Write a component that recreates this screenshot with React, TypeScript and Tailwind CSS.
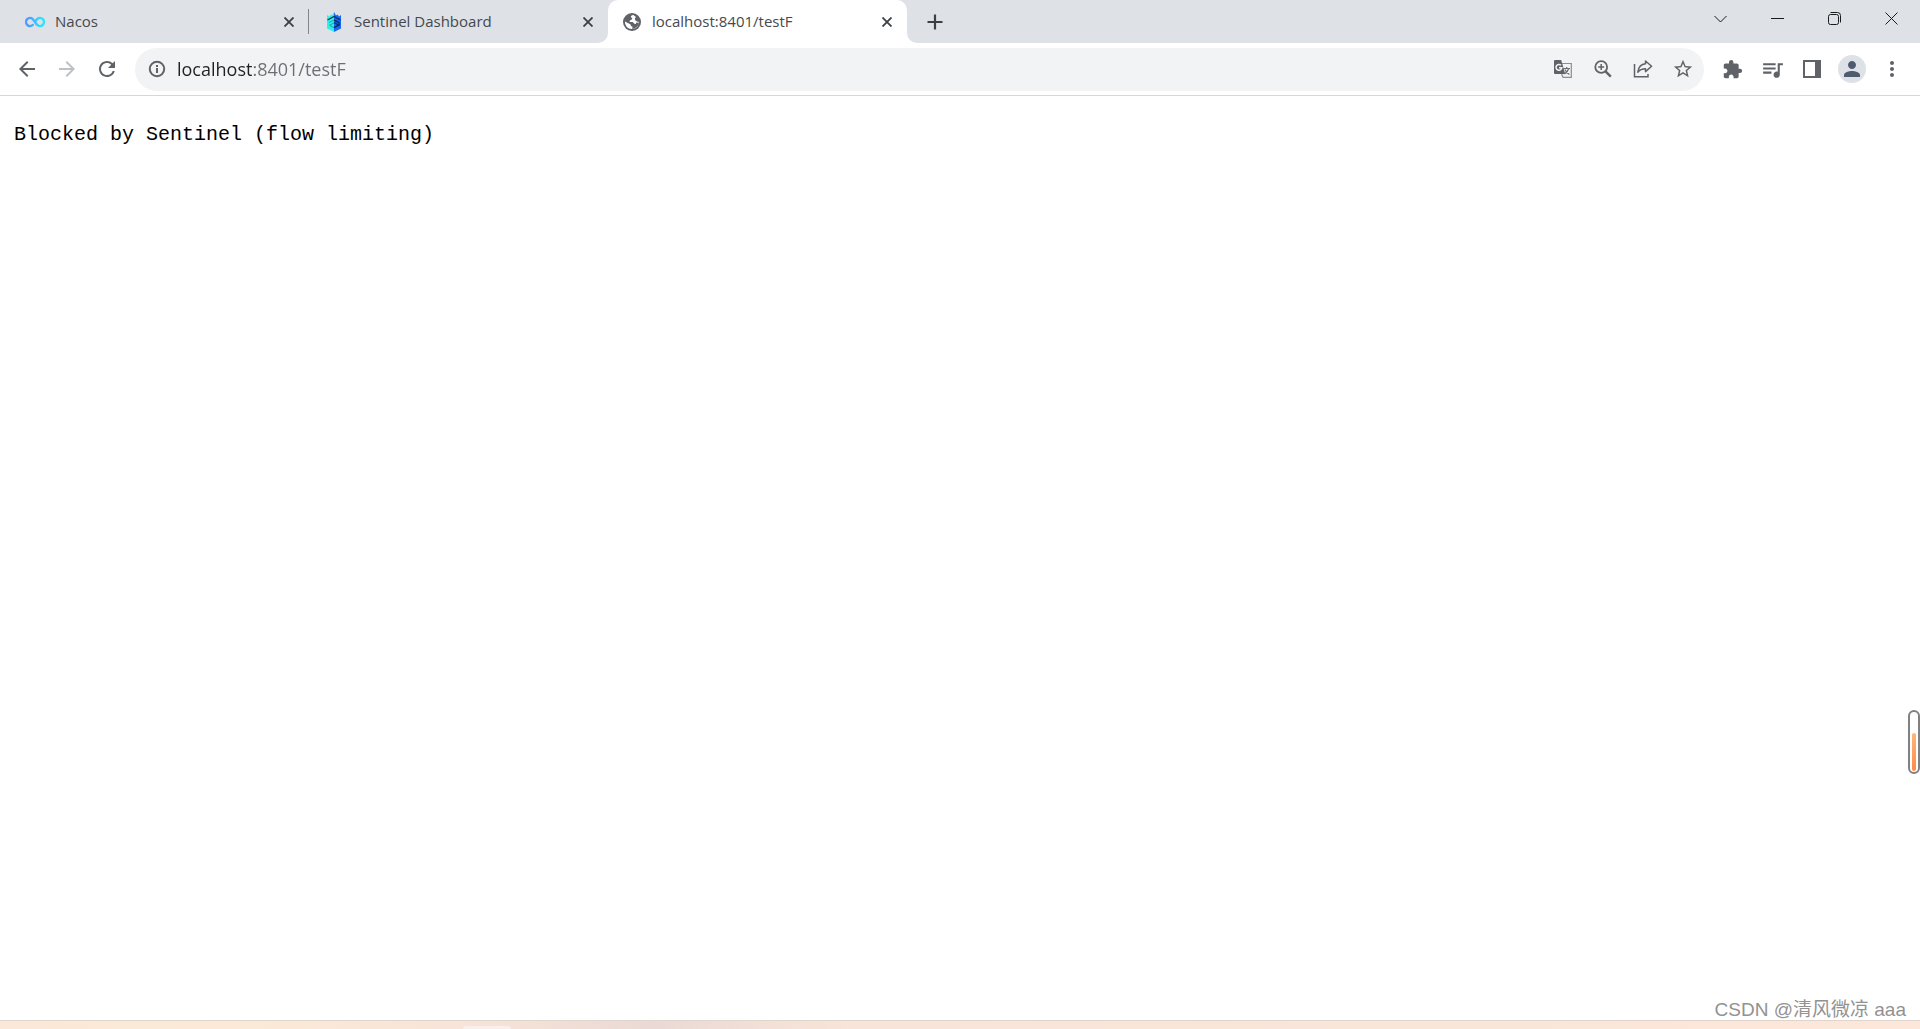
import React, { useState } from 'react';
import {
    MdArrowBack,
    MdArrowForward,
    MdExtension,
    MdMoreVert,
    MdPerson,
    MdQueueMusic,
    MdRefresh,
    MdStarBorder,
} from 'react-icons/md';

interface TabItem {
    id: string;
    title: string;
    icon: React.ReactNode;
}

const NacosIcon = () => (
    <svg viewBox="0 0 20 20" className="size-5" fill="none" strokeWidth="2.4" strokeLinecap="round">
        <defs>
            <linearGradient id="nacos" gradientUnits="userSpaceOnUse" x1="0" y1="0" x2="20" y2="0">
                <stop offset="0.2" stopColor="#4f9bff" />
                <stop offset="0.8" stopColor="#2ce3ff" />
            </linearGradient>
        </defs>
        <path
            stroke="url(#nacos)"
            d="M7.8 12.9A4 4 0 1 1 7.8 7.1C9.2 8.4 10.8 11.6 12.2 12.9A4 4 0 1 0 12.2 7.1C11.3 7.9 10.8 8.6 10.4 9.2"
        />
    </svg>
);

const SentinelIcon = () => (
    <svg viewBox="0 0 20 20" className="size-5">
        <path fill="#2ff0e4" d="M3 3 5 4.5 7 2.5 8 3.5 10 0V20L3 16.5Z" />
        <path fill="#1769f5" d="M10 0 12 3.5 13.5 2.5 15 4.5 17 3V16.5L10 20Z" />
        <path fill="none" stroke="#06335f" strokeWidth="1.4" d="M3.5 8 10 4.5 16.5 8M10 8 15 10.5V13L10 15.5" />
        <path fill="none" stroke="#0c8fae" strokeWidth="0.8" d="M10 8 5 10.5M10 11 5.5 13.2M5.5 13.2 10 15.8" />
        <path fill="none" stroke="#062a78" strokeWidth="1.2" d="M10 10.5 15.5 13.5" />
    </svg>
);

const GlobeIcon = () => (
    <svg viewBox="0 0 18 18" className="mr-px size-[18px]">
        <circle cx="9" cy="9" r="9" fill="#5f6368" />
        <path fill="#fff" d="M10.3 2.1C8.6 2.4 7.7 3.1 7.9 4.2L9.3 5 8.8 6.6 6.9 7.4 6.6 8.9 9.6 9.1 11.4 10.8 12.9 10.9 13.3 9.4 15.8 9.8A7 7 0 0 1 9.2 16L9.5 13.8 8 12.9 7.4 11.2 4.7 9.9 2 8.4A7 7 0 0 0 2.2 10.8 7 7 0 0 0 8.4 16L10 16A7 7 0 0 0 16 9L14 8.6 12.2 7.2 11.9 5.2 13 4.1Z" />
    </svg>
);

const InfoIcon = () => (
    <svg viewBox="0 0 20 20" className="size-5" fill="none" stroke="#5f6368" strokeWidth="2">
        <circle cx="10" cy="10" r="7.2" />
        <path d="M10 9V14M10 6V8" />
    </svg>
);

const TranslateIcon = () => (
    <svg viewBox="0 0 20 20" className="size-5" fill="none">
        <path stroke="#8b8e92" strokeWidth="1.2" d="M9 4.5H18.3V18.3H10L8.6 15" />
        <path stroke="#6b6f74" strokeWidth="1.2" d="M10.5 9.5H17M13.7 8V9.5M15.7 9.5C15 12 13.4 13.6 11.4 15M12 10.5C13 13 14.6 14.4 16.4 15.6" />
        <path fill="#5f6368" d="M2 1H8.2L12.2 15H2A1 1 0 0 1 1 14V2A1 1 0 0 1 2 1Z" />
        <path stroke="#f1f3f4" strokeWidth="1.5" d="M8 6.3A2.9 2.9 0 1 0 8.8 8.7H6" />
    </svg>
);

const ZoomIcon = () => (
    <svg viewBox="0 0 20 20" className="size-5" fill="none" stroke="#5f6368" strokeWidth="1.8">
        <circle cx="8.2" cy="8" r="5.9" />
        <path strokeWidth="1.5" d="M8.2 5V11M5.2 8H11.2" />
        <path strokeWidth="2.4" d="M12.3 12.1 17.8 17.6" />
    </svg>
);

const ShareIcon = () => (
    <svg viewBox="0 0 20 20" className="size-5" fill="none" stroke="#5f6368" strokeWidth="1.5">
        <path d="M1.5 5V17.8H15V15" />
        <path strokeLinejoin="round" d="M12.5 2 18.6 7.2 12.5 12.6V9.8C9.2 9.8 6.8 10.8 4.8 13.2 5.4 8.6 8.2 5.2 12.5 4.8Z" />
    </svg>
);

const CloseIcon = () => (
    <svg viewBox="0 0 10 10" className="size-[10px]" stroke="#3c4043" strokeWidth="1.8">
        <path d="M0.5 0.5 9.5 9.5M9.5 0.5 0.5 9.5" />
    </svg>
);

const PanelIcon = () => (
    <svg viewBox="0 0 18 18" className="size-[18px]" fill="#5f6368">
        <path fillRule="evenodd" d="M0 0H18V18H0ZM2 2V16H12V2Z" />
    </svg>
);

const tabs: TabItem[] = [
    { id: 'nacos', title: 'Nacos', icon: <NacosIcon /> },
    { id: 'sentinel', title: 'Sentinel Dashboard', icon: <SentinelIcon /> },
    { id: 'testf', title: 'localhost:8401/testF', icon: <GlobeIcon /> },
];

const windowButtons = [
    { label: 'Search tabs', path: 'M0.5 4 6.5 10 12.5 4' },
    { label: 'Minimize', path: 'M0 6.5H13' },
    { label: 'Restore', path: 'M2.5 2.5H8.5Q10.5 2.5 10.5 4.5V10.5Q10.5 12.5 8.5 12.5H2.5Q0.5 12.5 0.5 10.5V4.5Q0.5 2.5 2.5 2.5ZM2.5 0.5H9.5Q12.5 0.5 12.5 3.5V10.5' },
    { label: 'Close', path: 'M0.5 0.5 12.5 12.5M12.5 0.5 0.5 12.5' },
];

const IconButton: React.FC<{ label: string; children: React.ReactNode }> = ({ label, children }) => (
    <button type="button" aria-label={label} className="flex h-10 w-10 shrink-0 items-center justify-center text-[#5f6368]">
        {children}
    </button>
);

// Outward curve at the foot of the selected tab
const Flare: React.FC<{ className: string }> = ({ className }) => (
    <svg viewBox="0 0 10 10" className={`absolute bottom-0 size-[10px] ${className}`}>
        <path fill="#fff" d="M10 0V10H0A10 10 0 0 0 10 0Z" />
    </svg>
);

const App: React.FC = () => {
    const [active, setActive] = useState('testf');
    const [url, setUrl] = useState('localhost:8401/testF');

    return (
        <div className="relative flex min-h-screen flex-col bg-white font-['Open_Sans','Noto_Sans_CJK_SC',sans-serif]">
            <header className="border-b border-[#d5d7da]">
                <div className="flex h-[43px] bg-[#dee1e6] pl-[10px]">
                    {tabs.map((tab) => {
                        const selected = tab.id === active;
                        return (
                            <div
                                key={tab.id}
                                className={`relative flex w-[299px] items-center pr-3 pl-[15px] ${selected ? 'rounded-t-[10px] bg-white' : ''}`}
                            >
                                {selected && <Flare className="-left-[10px]" />}
                                {selected && <Flare className="-right-[10px] -scale-x-100" />}
                                <button
                                    type="button"
                                    onClick={() => setActive(tab.id)}
                                    className="flex min-w-0 flex-1 items-center gap-[10px] text-left text-[15px] text-[#45494d]"
                                >
                                    {tab.icon}
                                    <span className="truncate">{tab.title}</span>
                                </button>
                                <button type="button" aria-label={`Close ${tab.title}`} className="flex size-4 items-center justify-center">
                                    <CloseIcon />
                                </button>
                                {tab.id === 'nacos' && <span className="absolute right-0 h-[25px] w-px bg-[#80868b]" />}
                            </div>
                        );
                    })}
                    <button type="button" aria-label="New tab" className="ml-2 flex w-10 items-center justify-center">
                        <svg viewBox="0 0 16 16" className="size-4" stroke="#3c4043" strokeWidth="2.2">
                            <path d="M8 0.5V15.5M0.5 8H15.5" />
                        </svg>
                    </button>
                    <div className="ml-auto flex h-9">
                        {windowButtons.map((button) => (
                            <button
                                key={button.label}
                                type="button"
                                aria-label={button.label}
                                className="flex w-[57px] items-center justify-center"
                            >
                                <svg viewBox="0 0 13 13" className="size-[13px]" fill="none" stroke="#1b1b1b">
                                    <path d={button.path} />
                                </svg>
                            </button>
                        ))}
                    </div>
                </div>

                <div className="flex h-[52px] items-center pr-2 pl-[7px]">
                    <IconButton label="Back"><MdArrowBack size={24} /></IconButton>
                    <button type="button" disabled aria-label="Forward" className="flex h-10 w-10 items-center justify-center text-[#bdc1c6]">
                        <MdArrowForward size={24} />
                    </button>
                    <IconButton label="Reload"><MdRefresh size={24} /></IconButton>
                    <div className="mx-2 flex h-[43px] flex-1 items-center rounded-full bg-[#f1f3f4] pr-px pl-3">
                        <button type="button" aria-label="View site information">
                            <InfoIcon />
                        </button>
                        <input
                            type="text"
                            aria-label="Address"
                            value={url}
                            onChange={(e) => setUrl(e.target.value)}
                            className="ml-[10px] min-w-0 flex-1 bg-[linear-gradient(to_right,#202124_76px,#6b6f74_76px)] bg-clip-text text-[18px] text-transparent outline-none"
                        />
                        <IconButton label="Translate this page"><TranslateIcon /></IconButton>
                        <IconButton label="Zoom"><ZoomIcon /></IconButton>
                        <IconButton label="Share this page"><ShareIcon /></IconButton>
                        <IconButton label="Bookmark this tab"><MdStarBorder size={22} /></IconButton>
                    </div>
                    <IconButton label="Extensions"><MdExtension size={21} /></IconButton>
                    <IconButton label="Media controls"><MdQueueMusic size={25} /></IconButton>
                    <IconButton label="Side panel"><PanelIcon /></IconButton>
                    <IconButton label="Profile">
                        <span className="flex size-7 items-center justify-center rounded-full bg-[#dee1e6] text-[#4f5b70]">
                            <MdPerson size={24} />
                        </span>
                    </IconButton>
                    <IconButton label="Menu"><MdMoreVert size={24} /></IconButton>
                </div>
            </header>

            <main className="flex-1 px-[14px] pt-6">
                <pre className="font-['Liberation_Mono',monospace] text-[20px] leading-[30px] text-black">Blocked by Sentinel (flow limiting)</pre>
            </main>

            <footer className="flex h-[9px] items-end border-t border-[#dfd5cc] bg-[linear-gradient(to_right,#fbe8d8,#fcead7_12%,#f8e4d8_24%,#ebd9d5_34%,#f8e4d8_44%,#fce7da)]">
                <div className="ml-[463px] h-[3px] w-12 rounded-t-sm bg-[#faf0eb]" />
            </footer>

            {/* Gauge on the window's right edge */}
            <div className="absolute top-[710px] right-0 flex h-16 w-3 items-end justify-center rounded-full border-2 border-[#808080] bg-white p-px">
                <div className="h-[38px] w-1 rounded-full bg-linear-to-b from-[#ffb578] to-[#ff8a48]" />
            </div>

            <p className="absolute right-[14px] bottom-1 text-[19px] leading-[30px] font-['Liberation_Sans','Noto_Sans_CJK_SC',sans-serif] text-[#929292]">
                CSDN @清风微凉 aaa
            </p>
        </div>
    );
};

export default App;
